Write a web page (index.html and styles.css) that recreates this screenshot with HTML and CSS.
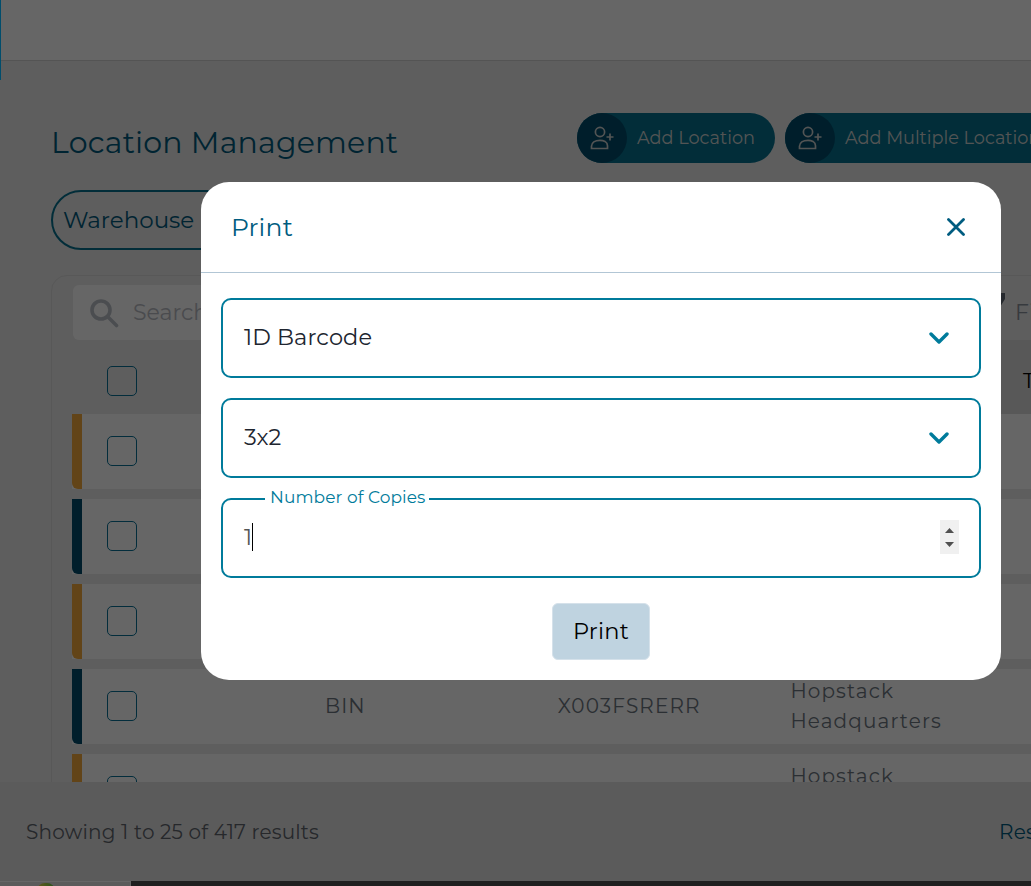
FILE: index.html
```html
<!DOCTYPE html>
<html lang="en">
<head>
<meta charset="utf-8">
<title>Location Management</title>
<link rel="stylesheet" href="styles.css">
</head>
<body>
<div class="app">
  <header class="topbar"><span class="topbar-accent"></span></header>
  <main class="main">
    <div class="title-row">
      <h1 class="page-title">Location Management</h1>
      <div class="actions">
        <button class="add-btn"><span class="add-icon"><svg viewBox="0 0 24 24" width="24" height="24" fill="none" stroke="currentColor" stroke-width="1.7"><circle cx="10" cy="6" r="4.6"/><path d="M1.5 22.5v-2.2c0-3.6 3.4-6 8.5-6 2 0 3.7.4 5 1.1 1.4.9 2.5 2.4 2.5 4.4v2.7z"/><path d="M16.5 11h7M20 7.5v7"/></svg></span><span class="add-label">Add Location</span></button>
        <button class="add-btn"><span class="add-icon"><svg viewBox="0 0 24 24" width="24" height="24" fill="none" stroke="currentColor" stroke-width="1.7"><circle cx="10" cy="6" r="4.6"/><path d="M1.5 22.5v-2.2c0-3.6 3.4-6 8.5-6 2 0 3.7.4 5 1.1 1.4.9 2.5 2.4 2.5 4.4v2.7z"/><path d="M16.5 11h7M20 7.5v7"/></svg></span><span class="add-label">Add Multiple Locations</span></button>
      </div>
    </div>
    <div class="filter-row"><div class="pill">Warehouse</div></div>
    <section class="card">
      <div class="search-row">
        <div class="search">
          <svg class="search-icon" viewBox="0 0 30 30" width="30" height="30" fill="none" stroke="currentColor" stroke-width="3.6" stroke-linecap="round"><circle cx="12" cy="12" r="9"/><path d="M19 19l8.5 8.5"/></svg>
          <span>Search</span>
        </div>
        <div class="filter-btn">
          <svg class="filter-icon" viewBox="0 0 14 14" width="14" height="14"><path d="M0 0h14v6l-5 8H5z" fill="currentColor"/></svg>
          <span>Filter</span>
        </div>
      </div>
      <div class="thead">
        <span class="check"></span>
        <span class="cell th">Type</span>
        <span class="cell th">Code</span>
        <span class="cell th">Warehouse</span>
        <span class="cell th th-last">Tote</span>
      </div>
      <div class="row row-gold"><span class="bar"></span><span class="check"></span><span class="cell">BIN</span><span class="cell">X003FSRERT</span><span class="cell">Hopstack Headquarters</span></div>
      <div class="row row-navy"><span class="bar"></span><span class="check"></span><span class="cell">BIN</span><span class="cell">X003FSRERS</span><span class="cell">Hopstack Headquarters</span></div>
      <div class="row row-gold"><span class="bar"></span><span class="check"></span><span class="cell">BIN</span><span class="cell">X003FSRERQ</span><span class="cell">Hopstack Headquarters</span></div>
      <div class="row row-navy"><span class="bar"></span><span class="check"></span><span class="cell">BIN</span><span class="cell">X003FSRERR</span><span class="cell">Hopstack Headquarters</span></div>
      <div class="row row-gold"><span class="bar"></span><span class="check"></span><span class="cell">BIN</span><span class="cell">X003FSRERP</span><span class="cell">Hopstack Headquarters</span></div>
    </section>
  </main>
  <footer class="pager">
    <span class="pager-count">Showing 1 to 25 of 417 results</span>
    <span class="pager-size">Results per page</span>
  </footer>
  <div class="taskbar"><span class="task-tab"><span class="task-dot"></span></span></div>
</div>

<div class="overlay"></div>

<div class="modal" role="dialog" aria-label="Print">
  <div class="modal-head">
    <h2 class="modal-title">Print</h2>
    <svg class="modal-close" viewBox="0 0 18 18" width="18" height="18" fill="none" stroke="currentColor" stroke-width="2.8" stroke-linecap="round"><path d="M1.5 1.5l15 15M16.5 1.5l-15 15"/></svg>
  </div>
  <div class="modal-body">
    <div class="field">
      <span>1D Barcode</span>
      <svg class="chevron" viewBox="0 0 20 12" width="20" height="12" fill="none" stroke="currentColor" stroke-width="3.4" stroke-linecap="round" stroke-linejoin="round"><path d="M2 2l8 8 8-8"/></svg>
    </div>
    <div class="field">
      <span>3x2</span>
      <svg class="chevron" viewBox="0 0 20 12" width="20" height="12" fill="none" stroke="currentColor" stroke-width="3.4" stroke-linecap="round" stroke-linejoin="round"><path d="M2 2l8 8 8-8"/></svg>
    </div>
    <div class="field field-number">
      <label class="field-label">Number of Copies</label>
      <span class="value">1</span><span class="caret"></span>
      <span class="spin">
        <svg viewBox="0 0 9 5" width="9" height="5"><path d="M4.500 0L9 5H0z" fill="currentColor"/></svg>
        <svg viewBox="0 0 9 5" width="9" height="5"><path d="M0 0h9L4.500 5z" fill="currentColor"/></svg>
      </span>
    </div>
    <div class="modal-actions"><button class="print-btn">Print</button></div>
  </div>
</div>
</body>
</html>
```
FILE: styles.css
```css
* { box-sizing: border-box; }
html, body { margin: 0; height: 100%; overflow: hidden; }
body { font-family: Montserrat, Inter, "Liberation Sans", sans-serif; color: #5f646d; }
h1, h2 { margin: 0; font-weight: 400; }
button { font-family: inherit; border: 0; padding: 0; }

.app { display: flex; flex-direction: column; height: 886px; width: 1031px; overflow: hidden; background: #eaeaea; }

.topbar { flex: 0 0 61px; background: #fff; border-bottom: 1px solid #d2d2d2; position: relative; }
.topbar-accent { position: absolute; left: 0; top: 0; width: 1px; height: 80px; background: #004d6c; z-index: 1; }

.main { flex: 1 1 auto; min-height: 0; overflow: hidden; padding: 52px 0 0 51px; }

.title-row { display: flex; height: 50px; align-items: center; }
.page-title { flex: 0 0 526px; padding: 8px 0 0; font-size: 30px; letter-spacing: .2px; color: #005a7e; }
.actions { display: flex; gap: 10px; flex: none; }
.add-btn { display: flex; align-items: center; height: 50px; border-radius: 25px; background: #057290; color: #cfd2d2; padding-right: 20px; white-space: nowrap; }
.add-icon { display: flex; align-items: center; justify-content: center; width: 50px; height: 50px; border-radius: 50%; background: #004d6c; flex: none; }
.add-label { margin: -2px 0 0 10px; font-size: 17.700px; }

.filter-row { margin-top: 27px; }
.pill { width: 260px; height: 60px; border: 2px solid #057290; border-radius: 30px; padding-left: 10px; display: flex; align-items: center; font-size: 23px; color: #005a7e; }

.card { margin-top: 25px; width: 1100px; height: 600px; border: 1px solid #dcdcdc; border-radius: 16px; background: #ebebeb; padding: 9px 0 0 20px; }
.search-row { display: flex; align-items: center; height: 55px; }
.search { margin-left: 1px; width: 900px; height: 55px; border-radius: 6px; background: #fff; display: flex; align-items: center; padding-left: 16px; font-size: 22px; color: #b9bcc4; }
.search-icon { color: #bcc1c9; margin-right: 14px; flex: none; }
.filter-btn { display: flex; align-items: center; gap: 10px; margin-left: 18px; font-size: 22px; color: #8b929c; }
.filter-icon { color: #5f6873; margin-top: -26px; }

.thead, .row { display: flex; align-items: center; width: 1079px; }
.thead { height: 74px; padding-left: 35px; color: #111; }
.thead .check { margin-top: 8px; }
.row { height: 75px; margin-bottom: 10px; background: #fff; }
.bar { flex: 0 0 10px; align-self: stretch; border-radius: 0 0 0 6px; }
.row-gold .bar { background: #f4ab3e; }
.row-navy .bar { background: #004d6c; }
.check { flex: 0 0 30px; height: 30px; border: 1px solid #087196; border-radius: 5px; }
.row .check { margin: -1px 0 0 25px; }
.cell { flex: 0 0 232.700px; font-size: 20px; line-height: 30px; letter-spacing: 1.120px; color: #6d767f; padding-right: 60px; }
.row .cell { margin-top: -2px; }
.check + .cell { margin-left: 188px; }
.th { color: #222; }
.th-last { align-self: stretch; display: flex; align-items: center; padding: 8px 0 0 22px; margin-left: -22px; background: #dcdcdc; color: #000; flex-basis: 300px; }

.pager { flex: 0 0 99px; background: #e4e4e4; display: flex; align-items: center; padding: 1px 0 0 26px; white-space: nowrap; font-size: 20px; letter-spacing: .2px; }
.pager-count { flex: 0 0 973px; color: #5f646d; }
.pager-size { color: #005a7e; }

.taskbar { flex: 0 0 5px; background: #4f4f4f; display: flex; overflow: hidden; }
.task-tab { width: 131px; background: #e4e4e4; border: 1px solid #ffffff; border-width: 1px 1px 0 0; position: relative; }
.task-dot { position: absolute; left: 37px; top: 1px; width: 18px; height: 8px; border-radius: 9px 9px 0 0; background: linear-gradient(90deg, #ffe14a, #5fd04a); }

.overlay { position: fixed; inset: 0; background: rgba(0, 0, 0, .6); }

.modal { position: fixed; left: 201px; top: 182px; width: 800px; height: 498px; background: #fff; border-radius: 28px; }
.modal-head { height: 91px; border-bottom: 1px solid #b2c6d5; display: flex; align-items: center; justify-content: space-between; padding: 0 36px 0 30px; }
.modal-title { font-size: 25px; letter-spacing: .2px; color: #005c80; }
.modal-close { color: #005c80; }
.modal-body { padding: 25px 20px 0; display: flex; flex-direction: column; gap: 20px; }
.field { position: relative; height: 80px; border: 2px solid #007b9b; border-radius: 10px; display: flex; align-items: center; padding: 0 30px 2px 21px; font-size: 22.500px; letter-spacing: .12px; color: #20252f; }
.chevron { margin: 2px 0 0 auto; color: #007b9b; }
.field-label { position: absolute; left: 42px; top: -13px; padding: 0 3px 0 5px; background: #fff; font-size: 17px; line-height: 20px; letter-spacing: .08px; color: #007b9b; }
.value { color: #555; }
.caret { width: 1px; height: 28px; background: #000; }
.spin { margin-left: auto; margin-right: -10px; width: 19px; height: 34px; background: #f0f0f0; display: flex; flex-direction: column; align-items: center; justify-content: center; gap: 9px; color: #505050; }
.spin svg { display: block; }
.modal-actions { display: flex; justify-content: center; margin-top: 5px; }
.print-btn { width: 98px; height: 57px; padding-bottom: 2px; border-radius: 6px; background: #bfd3e0; border: 1px solid #d5e1ea; font-size: 22.500px; letter-spacing: .25px; color: #000; }
```
